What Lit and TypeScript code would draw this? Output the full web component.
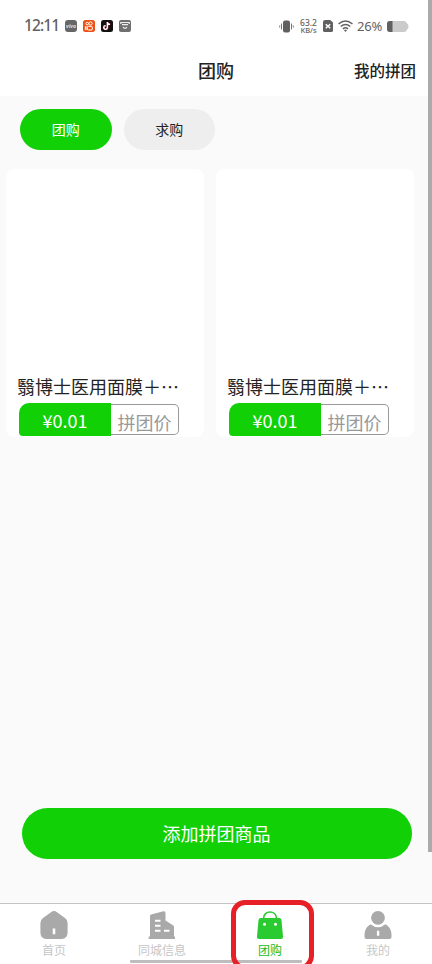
import { LitElement, html, css, svg } from "lit";
import { customElement } from "lit/decorators.js";
import { classMap } from "lit/directives/class-map.js";

const tabs = [
  {
    label: "首页",
    active: false,
    icon: svg`<path fill-rule="evenodd" d="M11 1.200Q14-1 17 1.200L25.300 7.200Q27.600 8.900 27.600 12V21.500Q27.600 28 21.500 28H6.500Q.4 28 .4 21.500V12Q.4 8.900 2.700 7.200ZM12.700 17.500V23.300H15.300V17.500Z"/>`,
  },
  {
    label: "同城信息",
    active: false,
    icon: svg`<path fill-rule="evenodd" d="M2 25.500V4.800Q2 3.800 3 3.400L15.500.3Q17.500 0 17.500 2V9.500L25 14.200Q26 15 26 16V25.500H27V28H.700V25.500ZM7 8.800V10.800H12.500V8.800ZM7 13.800V15.800H12.500V13.800ZM7 18.800V20.800H12.500V18.800ZM16 18.800V20.800H21.500V18.800Z"/>`,
  },
  {
    label: "团购",
    active: true,
    icon: svg`<path d="M7.500 9V7.500C7.500-1.200 20.500-1.200 20.500 7.500V9" fill="none" stroke="currentColor" stroke-width="1.700"/><path fill-rule="evenodd" d="M4.800 7H23.200Q25.200 7 25.500 9.200L27 25.500Q27.200 28 24.800 28H3.200Q.8 28 1 25.500L2.500 9.200Q2.800 7 4.800 7ZM8.500 11.700A1.500 1.500 0 1 0 8.500 14.700A1.500 1.500 0 1 0 8.500 11.700ZM19.500 11.700A1.500 1.500 0 1 0 19.500 14.700A1.500 1.500 0 1 0 19.500 11.700Z"/>`,
  },
  {
    label: "我的",
    active: false,
    icon: svg`<circle cx="14" cy="6.800" r="6.900"/><path fill-rule="evenodd" d="M6.500 13.200Q14 19.200 21.500 13.200Q27.500 16.500 27.500 23.500V26Q27.500 28 25.500 28H2.500Q.5 28 .5 26V23.500Q.5 16.500 6.500 13.200ZM12.900 19.800V24.800H15.300V19.800Z"/>`,
  },
];

@customElement("status-bar")
class StatusBar extends LitElement {
  static styles = css`
    :host { display: flex; height: 50px; align-items: center; justify-content: space-between; box-sizing: border-box; padding: 2px 23px 0 24px; color: #626262; font-family: "Noto Sans", sans-serif; }
    .side { display: flex; align-items: center; }
    .time { font-size: 15.500px; line-height: 20px; width: 41px; letter-spacing: -0.9px; font-weight: 500; margin-top: -2px; }
    .apps { gap: 6px; }
    .rate { display: flex; flex-direction: column; font-size: 8.500px; line-height: 8px; width: 19px; margin: 0 5px 0 5px; align-items: center; font-weight: 500; }
    .rate span + span { font-size: 7.500px; line-height: 7px; }
    .pct { font-size: 13px; letter-spacing: -0.15px; line-height: 18px; margin: 0 4px 0 4px; width: 26px; font-weight: 450; }
    svg { display: block; flex: none; }
    .wifi { margin-left: 5px; }
    .vivo { font: italic 700 5px "Noto Sans", sans-serif; fill: #ddd; }
  `;
  render() {
    return html`
      <div class="side apps">
        <span class="side"><span class="time">12:11</span>
          <svg width="12" height="12" viewBox="0 0 12 12"><rect width="12" height="12" rx="3" fill="#666"/><text class="vivo" x="6" y="7.600" text-anchor="middle" textLength="10" lengthAdjust="spacingAndGlyphs">vivo</text></svg></span>
        <svg width="12" height="12" viewBox="0 0 12 12"><rect width="12" height="12" rx="2.500" fill="#ec5216"/><g fill="none" stroke="#fff" stroke-width="1"><circle cx="4.200" cy="3.600" r="1.300"/><circle cx="7.600" cy="3.400" r="1.600"/><rect x="4.300" y="6.300" width="5" height="3.700" rx="1"/><path d="M4.300 7.500 2.400 6.600V9.600L4.300 8.700"/></g></svg>
        <svg width="12" height="12" viewBox="0 0 12 12"><rect width="12" height="12" rx="2.500" fill="#111"/><path d="M6.600 2V7.600A1.800 1.800 0 1 1 4.800 5.800M6.600 2.200Q7 4.400 9.200 4.600" fill="none" stroke="#e74f70" stroke-width="1.500"/><path d="M6.300 2V7.500A1.800 1.800 0 1 1 4.500 5.700M6.300 2Q6.700 4.200 9 4.400" fill="none" stroke="#fff" stroke-width="1.300"/></svg>
        <svg width="12" height="12" viewBox="0 0 12 12"><rect width="12" height="12" rx="2" fill="#707070"/><path d="M1.800 4V2.500H10.200V4M3 4.700H9M4 7Q6 9.800 8 7" fill="none" stroke="#eee" stroke-width="1.200"/></svg>
      </div>
      <div class="side">
        <svg width="15" height="13" viewBox="0 0 15 13"><rect x="4" y="0.500" width="7" height="12" rx="2" fill="#606060"/><path d="M2.500 3.500V9.500M12.500 3.500V9.500M.7 5.500V7.500M14.300 5.500V7.500" stroke="#777" stroke-width="1"/></svg>
        <div class="rate"><span>63.2</span><span>KB/s</span></div>
        <svg width="10" height="12" viewBox="0 0 9 12" preserveAspectRatio="none"><path d="M2 0H6.500L9 2.500V10.500Q9 12 7.500 12H1.500Q0 12 0 10.500V2Q0 0 2 0Z" fill="#606060"/><path d="M2.500 4.300 6.500 8.300M6.500 4.300 2.500 8.300" stroke="#fff" stroke-width="1.300"/></svg>
        <svg class="wifi" width="15" height="12" viewBox="0 0 15 12"><g fill="none" stroke="#646464" stroke-width="1.500"><path d="M.5 4Q7.500-2 14.500 4M2.700 6.500Q7.500 2.500 12.300 6.500M4.900 8.900Q7.500 6.800 10.100 8.900"/></g><path d="M6 10.200Q7.500 9 9 10.200L7.500 12Z" fill="#646464"/></svg>
        <span class="pct">26%</span>
        <svg width="22" height="11" viewBox="0 0 22 11"><path d="M3 0H17Q19.500 0 20 2.500Q21.500 3.200 21.500 5.500T20 8.500Q19.500 11 17 11H3Q0 11 0 8V3Q0 0 3 0Z" fill="#cbcbcb"/><path d="M3 0H5.500V11H3Q0 11 0 8V3Q0 0 3 0Z" fill="#606060"/></svg>
      </div>`;
  }
}

@customElement("product-card")
class ProductCard extends LitElement {
  static styles = css`
    :host { display: flex; flex-direction: column; justify-content: flex-end; width: 198px; height: 268px; background: #fff; border-radius: 8px; box-sizing: border-box; padding: 0 11px 1px; }
    .title { font-size: 18px; line-height: 26px; color: #242424; white-space: nowrap; margin-bottom: 4px; }
    .price { display: flex; align-items: center; height: 33px; margin-left: 2px; font-size: 18px; }
    .now { width: 92px; height: 33px; background: #11d006; color: #fff; border-radius: 10px 0 0 4px; display: flex; align-items: center; justify-content: center; box-sizing: border-box; }
    .kind { width: 68px; height: 31px; box-sizing: border-box; border: 1px solid #999; border-left: 0; border-radius: 0 5px 5px 0; color: #999; display: flex; align-items: center; justify-content: center; padding-top: 4px; }
  `;
  render() {
    return html`<div class="title">翳博士医用面膜＋…</div>
      <div class="price"><div class="now">¥0.01</div><div class="kind">拼团价</div></div>`;
  }
}

@customElement("app-root")
class AppRoot extends LitElement {
  static styles = css`
    :host { display: flex; flex-direction: column; position: relative; width: 432px; height: 964px; overflow: hidden; background: #fafafa; font-family: "Noto Sans CJK SC", sans-serif; font-weight: 400; }
    .top { background: #fff; height: 96px; }
    .nav { display: grid; grid-template-columns: 1fr 1fr 1fr; align-items: center; height: 40px; padding: 0 16px; color: #222; }
    .nav h1 { grid-column: 2; margin: 0; text-align: center; font-size: 18px; font-weight: 500; line-height: 26px; }
    .mine { text-align: right; font-size: 15.500px; font-weight: 500; line-height: 24px; padding-bottom: 1px; }
    .filters { display: flex; gap: 12px; padding: 13px 20px 19px; }
    .pill { width: 91.500px; height: 41px; border-radius: 21px; background: #eee; color: #222; font-size: 14px; display: flex; align-items: center; justify-content: center; box-sizing: border-box; padding-bottom: 1px; }
    .pill.on { background: #11d006; color: #fff; }
    .cards { display: flex; gap: 12px; padding-left: 6px; flex: 1; align-items: flex-start; }
    .add { margin: 0 20.500px 44px 21.500px; height: 51px; border: 0; border-radius: 26px; background: #11d006; color: #fff; font: inherit; font-size: 18px; padding: 0 0 1px; }
    .tabs { display: grid; grid-template-columns: repeat(4, 1fr); height: 61px; box-sizing: border-box; border-top: 1px solid #c4c4c4; background: #fff; }
    .tab { display: flex; flex-direction: column; align-items: center; padding-top: 7px; color: #a9a9a9; }
    .tab svg { width: 28px; height: 28px; fill: currentColor; overflow: visible; }
    .tab span { font-size: 12px; line-height: 18px; margin-top: 2px; color: #c6c6c6; }
    .tab.on { color: #29cb30; }
    .tab.on span { color: #22bc22; }
    .scroll { position: absolute; right: 0; top: 0; width: 4px; height: 852px; background: #ababab; }
    .gesture { position: absolute; left: 130px; bottom: 1px; width: 172px; height: 3px; border-radius: 1px; background: #bdbdbd; }
    .mark { position: absolute; left: 231px; top: 900px; width: 83px; height: 70px; box-sizing: border-box; border: 5px solid #e71f27; border-radius: 14px; }
  `;
  render() {
    return html`
      <div class="top">
        <status-bar></status-bar>
        <div class="nav"><h1>团购</h1><div class="mine">我的拼团</div></div>
      </div>
      <div class="filters"><div class="pill on">团购</div><div class="pill">求购</div></div>
      <div class="cards"><product-card></product-card><product-card></product-card></div>
      <button class="add">添加拼团商品</button>
      <div class="tabs">
        ${tabs.map((t) => html`<div class=${classMap({ tab: true, on: t.active })}><svg viewBox="0 0 28 28">${t.icon}</svg><span>${t.label}</span></div>`)}
      </div>
      <div class="scroll"></div>
      <div class="gesture"></div>
      <div class="mark"></div>`;
  }
}
